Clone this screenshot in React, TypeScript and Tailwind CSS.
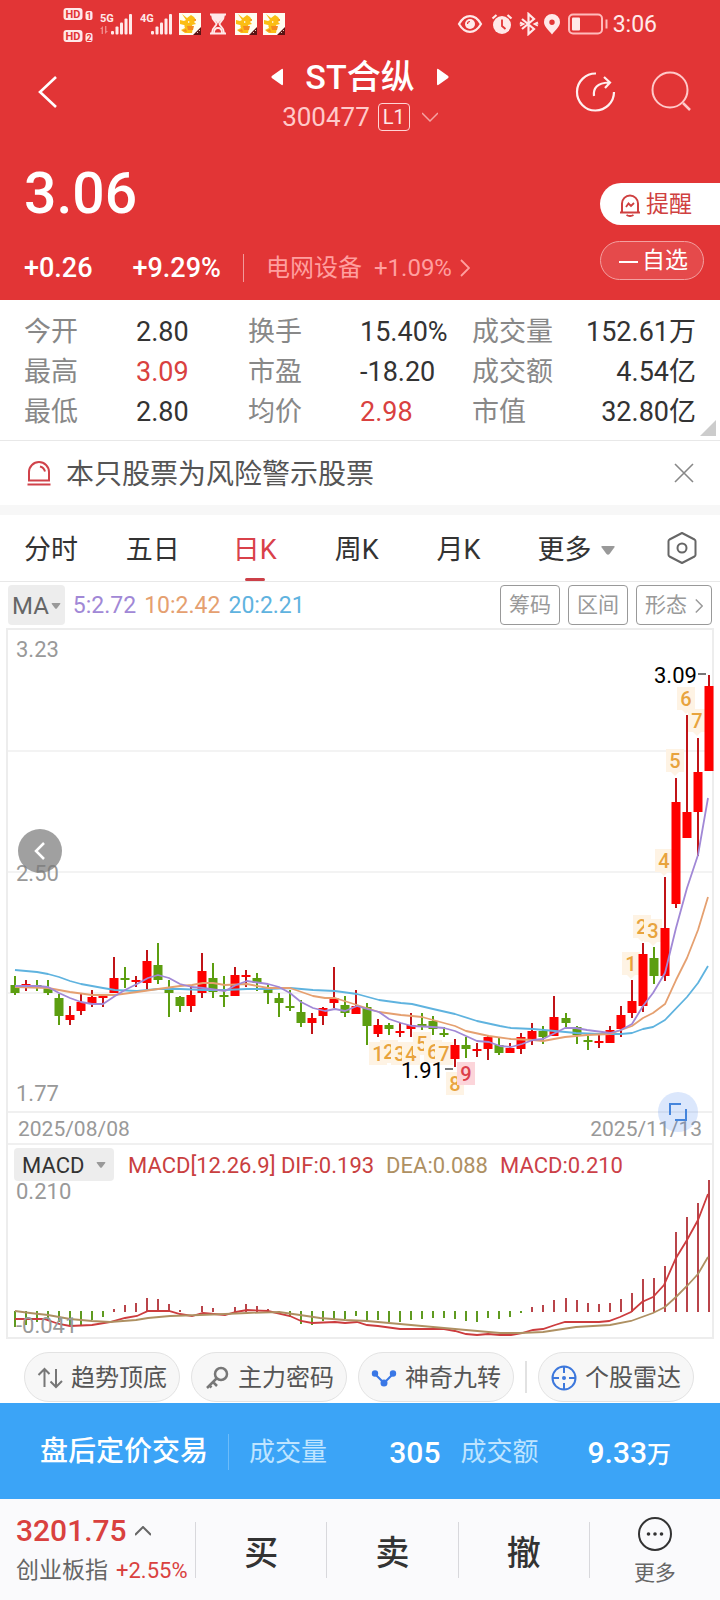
import { ReactNode } from 'react'

type Candle = [color: 'r' | 'g', high: number, top: number, bottom: number, low: number]

const candles: Candle[] = [
  ['g', 976, 985, 993, 995], ['r', 980, 984, 986, 991], ['g', 980, 985, 987, 991], ['g', 980, 988, 993, 995],
  ['g', 994, 998, 1016, 1025], ['r', 1006, 1015, 1020, 1025], ['r', 994, 1002, 1011, 1015], ['r', 990, 997, 1003, 1007],
  ['r', 995, 996, 998, 1007], ['r', 957, 978, 993, 993], ['g', 967, 978, 980, 988], ['r', 976, 980, 982, 987],
  ['r', 950, 961, 983, 989], ['g', 943, 965, 980, 984], ['g', 980, 989, 993, 1017], ['g', 996, 997, 1006, 1012],
  ['r', 986, 995, 1006, 1012], ['r', 953, 971, 993, 998], ['g', 963, 978, 992, 998], ['g', 976, 995, 997, 1007],
  ['r', 967, 975, 996, 996], ['r', 970, 975, 977, 987], ['g', 973, 978, 983, 991], ['g', 985, 989, 993, 1004],
  ['g', 993, 998, 1003, 1017], ['g', 990, 1006, 1008, 1011], ['g', 1000, 1012, 1023, 1027], ['r', 1013, 1018, 1023, 1034],
  ['r', 1007, 1008, 1016, 1025], ['r', 967, 998, 1003, 1008], ['g', 996, 1005, 1013, 1017], ['r', 990, 1006, 1014, 1014],
  ['g', 1003, 1007, 1026, 1045], ['r', 1019, 1025, 1034, 1037], ['g', 1023, 1025, 1029, 1035], ['r', 1023, 1031, 1033, 1037],
  ['r', 1013, 1025, 1029, 1037], ['g', 1013, 1024, 1026, 1030], ['g', 1016, 1021, 1029, 1035], ['g', 1027, 1033, 1035, 1037],
  ['r', 1039, 1045, 1059, 1067], ['g', 1037, 1045, 1049, 1058], ['r', 1043, 1049, 1051, 1057], ['r', 1035, 1037, 1049, 1060],
  ['g', 1038, 1045, 1053, 1055], ['r', 1043, 1048, 1053, 1053], ['r', 1033, 1037, 1049, 1054], ['r', 1023, 1031, 1040, 1045],
  ['g', 1026, 1031, 1037, 1044], ['r', 996, 1017, 1036, 1036], ['g', 1013, 1018, 1023, 1027], ['g', 1026, 1027, 1035, 1044],
  ['g', 1036, 1040, 1042, 1050], ['r', 1035, 1041, 1043, 1048], ['r', 1026, 1030, 1043, 1043], ['r', 1006, 1015, 1029, 1037],
  ['r', 980, 1001, 1013, 1018], ['r', 943, 954, 1006, 1012], ['g', 947, 958, 976, 984], ['r', 877, 928, 976, 981],
  ['r', 778, 802, 904, 908], ['r', 715, 812, 838, 838], ['r', 738, 772, 812, 856], ['r', 675, 686, 771, 771],
]

const ma5 = '15,986 37,986 48,987 59,993 70,998 81,1002 92,1004 103,1004 115,996 125,990 137,984 148,978 158,975 169,978 180,984 192,987 203,988 225,991 236,985 247,981 268,984 279,987 290,993 301,1002 313,1008 325,1011 335,1009 345,1011 357,1006 367,1009 379,1012 389,1019 401,1023 412,1026 433,1027 444,1028 455,1031 466,1036 477,1041 489,1042 500,1046 511,1047 522,1044 533,1040 543,1039 555,1033 565,1028 576,1028 587,1030 610,1033 621,1030 632,1024 643,1006 653,993 665,973 676,928 687,888 698,855 708,798'
const ma10 = '15,987 48,988 70,992 92,995 115,995 137,992 158,989 180,986 192,985 203,983 213,983 225,985 247,984 268,988 290,988 313,996 325,998 335,998 357,1005 379,1012 401,1015 412,1016 422,1017 433,1020 455,1026 466,1031 489,1036 511,1039 533,1040 543,1041 565,1037 587,1035 610,1034 621,1030 632,1026 643,1018 653,1013 665,1004 676,980 687,958 698,930 708,897'
const ma20 = '15,970 37,972 48,974 59,977 70,981 81,984 103,988 115,990 137,991 158,989 180,989 203,990 225,990 247,989 268,989 290,988 313,990 335,991 357,994 379,1000 401,1003 412,1004 433,1009 455,1014 477,1021 500,1026 511,1028 533,1029 555,1031 576,1033 599,1034 621,1034 632,1033 643,1029 653,1027 665,1020 687,997 698,983 708,966'

const dif = '15,1319 44,1319 59,1324 70,1326 92,1325 110,1322 125,1318 137,1316 148,1311 158,1311 169,1311 180,1314 192,1316 203,1313 225,1315 236,1312 247,1310 268,1311 290,1316 301,1321 312,1323 335,1322 345,1323 357,1322 367,1325 378,1326 400,1329 444,1329 455,1331 466,1334 477,1335 488,1334 500,1335 511,1335 522,1333 533,1330 543,1329 555,1325 565,1322 599,1322 609,1321 620,1317 631,1312 642,1302 653,1297 664,1285 676,1258 687,1240 698,1220 708,1194'
const dea = '15,1311 30,1313 48,1315 70,1319 92,1321 110,1322 136,1320 148,1318 170,1316 200,1315 225,1314 247,1313 279,1312 300,1315 320,1318 345,1320 367,1321 400,1324 433,1327 466,1330 500,1333 520,1333 543,1332 576,1327 610,1325 631,1321 653,1313 665,1307 676,1297 687,1286 698,1274 708,1257'

// end of each histogram bar, measured from the zero axis
const histogram = [
  -16, -14, -11, -10, -11, -15, -14, -9, -6, 3, 7, 9, 14, 13, 8, 2, 0, 6, 4, 0, 5, 8, 6, 3,
  -3, -6, -13, -14, -10, -9, -8, -5, -9, -9, -11, -11, -9, -8, -7, -7, -8, -10, -11, -7, -8, -6, -2,
  5, 7, 12, 14, 12, 9, 8, 9, 13, 19, 33, 34, 46, 80, 95, 109, 132,
]

const marks: [label: string, x: number, y: number][] = [
  ['1', 378, 1061], ['2', 389, 1059], ['3', 400, 1061], ['4', 411, 1061], ['5', 422, 1051], ['6', 433, 1059], ['7', 444, 1061],
  ['8', 455, 1091], ['9', 466, 1081],
  ['1', 631, 971], ['2', 642, 934], ['3', 653, 938], ['4', 664, 868], ['5', 675, 768], ['6', 686, 706], ['7', 697, 728],
]

const slotX = (i: number) => Math.round(15 + i * 11.01)

const stats = [
  [['今开', '2.80', ''], ['换手', '15.40%', ''], ['成交量', '152.61万', '']],
  [['最高', '3.09', 'up'], ['市盈', '-18.20', ''], ['成交额', '4.54亿', '']],
  [['最低', '2.80', ''], ['均价', '2.98', 'up'], ['市值', '32.80亿', '']],
]

function Caret({ className }: { className: string }) {
  return (
    <svg viewBox="0 0 14 9" className={className} fill="currentColor">
      <path d="M1.5 0h11q2 0 .8 1.6L8.5 8Q7 9.5 5.5 8L.7 1.6Q-.5 0 1.5 0Z" />
    </svg>
  )
}

function Signal({ label, arrows }: { label: string; arrows?: boolean }) {
  return (
    <svg viewBox="0 0 34 24" className="h-6 w-[34px]" fill="#ffe9e9">
      <text x="0" y="10" fontSize="11" fontWeight="700">{label}</text>
      {arrows && <path d="M0 17l3-3v8H1.6v-5zM5 14h1.4v5H8l-3 3z" fill="#f08a8a" />}
      <rect x="11" y="19" width="3" height="3.5" rx="1" />
      <rect x="15.5" y="14.5" width="3" height="8" rx="1" />
      <rect x="20" y="10.5" width="3" height="12" rx="1" />
      <rect x="24.5" y="6.5" width="3" height="16" rx="1" />
      <rect x="29" y="2" width="3" height="20.5" rx="1" />
    </svg>
  )
}

function FoxIcon() {
  return (
    <svg viewBox="0 0 22 22" className="size-[22px]">
      <path fill="#fffdf2" d="M0 0h22v22H0z" />
      <path fill="#fbbd14" d="M3 1l5 4 4-3 3 2 2 3-2 2 2 2-4 1 1 3-1 5H6l-4-3 4-2-1-3-4-1V7l4 1 2-1z" />
      <path fill="#f58a1f" d="M8 13h7l-1 4H9zM14 7l3-1v2zM3 18l4-2 1 3z" />
      <path fill="#fff" d="M9 8l2 1-2 1zM1 12l5 0-3 2z" />
      <path fill="#5b1414" d="M22 14v8h-8z" />
      <path stroke="#e9c9b8" d="M18 19l1 1M20 17l1 1" />
    </svg>
  )
}

function StatusBar() {
  return (
    <div className="flex h-12 items-center justify-between px-[63px]">
      <div className="flex items-center">
        <svg viewBox="0 0 30 36" className="mr-[7px] h-9 w-[30px] shrink-0">
          {[0, 22].map((y, i) => (
            <g key={y}>
              <rect x="0.5" y={y + 2} width="19" height="12" rx="3" fill="#ffe9e9" />
              <text x="10" y={y + 12} fontSize="11" fontWeight="700" textAnchor="middle" fill="#e23536">HD</text>
              <rect x="22.5" y={y + 5} width="7" height="9" rx="2" fill="#ffe9e9" />
              <text x="26" y={y + 13} fontSize="9" fontWeight="700" textAnchor="middle" fill="#e23536">{i + 1}</text>
            </g>
          ))}
        </svg>
        <Signal label="5G" arrows />
        <div className="w-1.5" />
        <Signal label="4G" />
        <div className="ml-[5px] flex items-center gap-1.5">
          <FoxIcon />
          <svg viewBox="0 0 22 22" className="size-[22px]" fill="none" stroke="#ffe9e9" strokeWidth="1.8">
            <path d="M3 1.5h16M3 20.5h16" />
            <path d="M5 2c0 6 4 6 4.5 9-.5 3-4.5 3-4.5 9M17 2c0 6-4 6-4.5 9 .5 3 4.5 3 4.5 9" />
            <path d="M5 2h12c0 5-4 5-6 9-2-4-6-4-6-9z" fill="#ffe9e9" stroke="none" />
            <path d="M7 20c0-4 2-5 4-5s4 1 4 5" />
          </svg>
          <FoxIcon />
          <FoxIcon />
        </div>
      </div>
      <div className="flex items-center text-[#ffe9e9]">
        <svg viewBox="0 0 26 22" className="h-[22px] w-[26px]" fill="none" stroke="currentColor" strokeWidth="2.2">
          <path d="M2 11C8 .5 18 .5 24 11 18 21.5 8 21.5 2 11z" />
          <circle cx="13" cy="11" r="5" fill="currentColor" stroke="none" />
          <path d="M10.5 11q0-2.5 2.5-2.5" stroke="#e23536" strokeWidth="1.2" />
        </svg>
        <svg viewBox="0 0 22 22" className="ml-2 size-[22px]" fill="none" stroke="currentColor" strokeWidth="2.2">
          <circle cx="11" cy="12" r="9" fill="currentColor" stroke="none" />
          <path d="M1.5 5.5L5.5 2M20.5 5.5L16.5 2" />
          <path d="M11 6.5V13l3.5 3" stroke="#e23536" strokeWidth="1.8" />
        </svg>
        <svg viewBox="0 0 20 24" className="ml-1.5 h-6 w-5" fill="none" stroke="currentColor" strokeWidth="2.2">
          <path d="M3 7l12 10-5.5 5V2L15 7 3 17" />
          <path d="M1 10.5l3 1.5-3 1.5M19 10.5L16 12l3 1.5" />
        </svg>
        <svg viewBox="0 0 18 22" className="ml-1 h-[22px] w-[18px]" fill="currentColor">
          <path fillRule="evenodd" d="M9 1a8 8 0 0 1 8 8c0 4.5-4.5 8-8 12.5C5.5 17 1 13.5 1 9a8 8 0 0 1 8-8zm0 5.5a2.7 2.7 0 1 0 0 5.4 2.7 2.7 0 0 0 0-5.4z" />
        </svg>
        <svg viewBox="0 0 42 22" className="ml-1.5 h-[22px] w-[42px]" fill="none" stroke="#fbb" strokeWidth="2">
          <rect x="2" y="1.5" width="33" height="19" rx="4" />
          <rect x="5" y="4.5" width="8" height="13" rx="1" fill="#ffe9e9" stroke="none" />
          <path d="M39.5 6.5v9" />
        </svg>
        <span className="ml-1 pt-0.5 text-[23px] leading-6">3:06</span>
      </div>
    </div>
  )
}

function Header() {
  return (
    <header className="bg-[#e23536] text-white">
      <StatusBar />
      <div className="flex h-[92px] items-center justify-between px-7 pb-1">
        <div className="flex-1">
          <button aria-label="返回" className="ml-2 block">
            <svg viewBox="0 0 24 36" className="h-9 w-6" fill="none" stroke="currentColor" strokeWidth="2.6">
              <path d="M20 3L4 18l16 15" />
            </svg>
          </button>
        </div>
        <div className="flex flex-col items-center pt-2">
          <div className="flex items-center gap-[22px]">
            <button aria-label="上一只">
              <svg viewBox="0 0 12 18" className="h-[18px] w-3" fill="currentColor"><path d="M12 2v14q0 2-2 .5L.8 10Q0 9 .8 8L10 1.5Q12 0 12 2z" /></svg>
            </button>
            <h1 className="text-[34px] leading-10 font-medium">ST合纵</h1>
            <button aria-label="下一只">
              <svg viewBox="0 0 12 18" className="h-[18px] w-3" fill="currentColor"><path d="M0 2v14q0 2 2 .5L11.2 10q.8-1 0-2L2 1.5Q0 0 0 2z" /></svg>
            </button>
          </div>
          <button className="flex items-center pt-0.5 text-[26px] leading-9 text-[#ffc9c9]">
            300477
            <span className="ml-2 flex h-7 items-center rounded border border-[#ffd5d5] px-1 text-[20px] text-[#ffe9e9]">L1</span>
            <svg viewBox="0 0 16 10" className="ml-3 h-2.5 w-4" fill="none" stroke="#f5a3a3" strokeWidth="1.5"><path d="M0 1l8 8 8-8" /></svg>
          </button>
        </div>
        <div className="flex flex-1 items-center justify-end gap-[34px]">
          <button aria-label="分享">
            <svg viewBox="0 0 42 42" className="size-[42px]" fill="none" stroke="#fff0f0" strokeWidth="2.2">
              <path d="M22 2.5a18.5 18.5 0 1 0 18 18.5" />
              <path d="M20 25c-1-8 3-13 15-13.5M30 6l6 5.5-5 5.5" />
            </svg>
          </button>
          <button aria-label="搜索">
            <svg viewBox="0 0 42 42" className="size-[42px]" fill="none" stroke="#ffc9c9" strokeWidth="2">
              <circle cx="20" cy="19" r="17.5" />
              <path d="M33 32l7 7" strokeWidth="2.5" />
            </svg>
          </button>
        </div>
      </div>
      <div className="flex h-40 justify-between pl-6">
        <div className="flex flex-col">
          <div className="pt-[22px] text-[57px] leading-[64px] font-medium">3.06</div>
          <div className="mt-6 flex items-center text-[27px] leading-9 font-medium">
            <span>+0.26</span>
            <span className="ml-10">+9.29%</span>
            <span className="mx-[22px] h-7 w-px bg-[#f29a9a]" />
            <a href="#sector" className="flex items-center text-2xl font-normal text-[#ff9f9f]">
              电网设备
              <span className="ml-3">+1.09%</span>
              <svg viewBox="0 0 10 18" className="ml-2 h-[18px] w-2.5" fill="none" stroke="currentColor" strokeWidth="1.8"><path d="M1 1l8 8-8 8" /></svg>
            </a>
          </div>
        </div>
        <div className="flex w-[120px] flex-col items-start pt-[43px]">
          <button className="flex h-[42px] w-full items-center rounded-l-full bg-white pt-0.5 pl-[18px] text-[23px] text-[#cf4040]">
            <svg viewBox="0 0 24 24" className="mr-1 size-6" fill="none" stroke="currentColor" strokeWidth="2">
              <path d="M2 19.5h20M4 19V10.5a8 8 0 0 1 16 0V19" />
              <path d="M8.5 22q3.5 2 7 0" />
              <path d="M8 14l2.5-3.5L13 13l3-3" strokeWidth="1.8" />
            </svg>
            提醒
          </button>
          <button className="mt-4 flex h-[39px] w-[104px] items-center rounded-full border border-[#f3a0a0] bg-[#e54a4b] pt-0.5 pl-[18px] text-[23px]">
            <span className="mr-1 h-0.5 w-[19px] bg-white" />
            自选
          </button>
        </div>
      </div>
    </header>
  )
}

function Stats() {
  return (
    <section className="relative border-b border-[#e8e8e8] px-6 pt-3 pb-2">
      <table className="w-full table-fixed text-[27px] leading-10">
        <colgroup>
          <col className="w-1/6" /><col className="w-1/6" /><col className="w-1/6" />
          <col className="w-1/6" /><col className="w-1/6" /><col className="w-1/6" />
        </colgroup>
        <tbody>
          {stats.map((row) => (
            <tr key={row[0][0]} className="h-10">
              {row.map(([label, value, tone], i) => [
                <th key={label} className="p-0 text-left font-normal whitespace-nowrap text-[#888]">{label}</th>,
                <td key={label + 'v'} className={i === 2 ? 'p-0 text-right whitespace-nowrap text-[#333]' : tone === 'up' ? 'p-0 text-[#d9413f]' : 'p-0 text-[#333]'}>
                  <span className={i === 2 ? '-ml-8' : ''}>{value}</span>
                </td>,
              ])}
            </tr>
          ))}
        </tbody>
      </table>
      <svg viewBox="0 0 16 16" className="absolute right-1 bottom-1 size-4" fill="#ccc"><path d="M16 0v16H0z" /></svg>
    </section>
  )
}

function Tabs() {
  const tab = 'relative flex h-full w-[15.3%] items-center justify-center pt-1'
  return (
    <nav className="flex h-[67px] items-center border-b border-[#e8e8e8] pr-[22px] text-[27px] whitespace-nowrap text-[#333]">
      <div className="flex h-full flex-1 items-center">
        <button className={tab}>分时</button>
        <button className={tab}>五日</button>
        <button className={tab}>
          <span className="text-[#d9414a]">日K</span>
          <span className="absolute bottom-0 left-1/2 h-[3px] w-5 -translate-x-1/2 rounded-full bg-[#cc4048]" />
        </button>
        <button className={tab}>周K</button>
        <button className={tab}>月K</button>
        <button className="flex h-full flex-1 items-center pt-1 pl-7">
          更多<Caret className="ml-2.5 h-[9px] w-3.5 text-[#999]" />
        </button>
      </div>
      <button aria-label="设置">
        <svg viewBox="0 0 32 34" className="h-[34px] w-8" fill="none" stroke="#666" strokeWidth="2" strokeLinejoin="round">
          <path d="M16 2l12.5 6.5q1 .6 1 1.8v13.4q0 1.200-1 1.8L16 32 3.5 25.5q-1-.6-1-1.8V10.3q0-1.2 1-1.8z" />
          <circle cx="16" cy="17" r="4.5" />
        </svg>
      </button>
    </nav>
  )
}

function Outlined({ children }: { children: ReactNode }) {
  return <button className="flex h-10 items-center rounded border border-[#999] px-2 pt-0.5 text-[21px] text-[#999]">{children}</button>
}

function KChart() {
  return (
    <div className="relative">
      <svg viewBox="8 630 704 481" className="block w-full overflow-visible">
        <path d="M8 751H712M8 872H712M8 993H712" stroke="#f3f3f3" strokeWidth="2" />
        <g fontSize="22" fill="#999">
          <text x="16" y="657">3.23</text>
          <text x="16" y="881">2.50</text>
          <text x="16" y="1101">1.77</text>
        </g>
        {marks.map(([label, x, y]) => (
          <g key={label + x}>
            <path d={`M${x - 9} ${y - 19}h18v23h-18z`} fill={label === '9' ? '#fcd5da' : '#fef3e4'} />
            {label !== '9' && y < 1000 && <path d={`M${x - 4} ${y + 4}h8l-4 4z`} fill="#fef3e4" />}
            <text x={x} y={y} fontSize="20" fontWeight="500" textAnchor="middle" fill={label === '9' ? '#dc3f4c' : '#e8a33d'}>{label}</text>
          </g>
        ))}
        {candles.map(([color, high, top, bottom, low], i) => (
          <g key={i} fill={color === 'r' ? '#fe0000' : '#5c9e10'}>
            <rect x={slotX(i) - 1} y={high} width="2" height={low - high} fill={color === 'r' ? '#c01418' : '#5c9e10'} />
            <rect x={slotX(i) - 4.5} y={top} width="9" height={bottom - top} />
          </g>
        ))}
        <g fill="none" strokeWidth="1.8" strokeLinejoin="round">
          <polyline points={ma20} stroke="#5fb3df" />
          <polyline points={ma10} stroke="#e5a070" />
          <polyline points={ma5} stroke="#a188d6" />
        </g>
        <g fontSize="22" fill="#000">
          <text x="654" y="683">3.09</text>
          <text x="401" y="1078">1.91</text>
        </g>
        <path d="M698 674h8M445 1069h8" stroke="#777" strokeWidth="2" />
      </svg>
      <button aria-label="向左" className="absolute top-[199px] left-2.5 flex size-11 items-center justify-center rounded-full bg-[#777]/70">
        <svg viewBox="0 0 12 20" className="h-5 w-3" fill="none" stroke="#fff" strokeWidth="2.5"><path d="M10 2L2 10l8 8" /></svg>
      </button>
      <button aria-label="全屏" className="absolute right-3.5 -bottom-[21px] z-10 flex size-10 items-center justify-center rounded-full bg-[#4c86ee]/20">
        <svg viewBox="0 0 18 18" className="size-[18px]" fill="none" stroke="#4585dc" strokeWidth="2"><path d="M1 12V1h11M17 6v11H6" /></svg>
      </button>
    </div>
  )
}

function MacdChart() {
  return (
    <svg viewBox="8 1181 704 156" className="block w-full overflow-visible">
      {histogram.map((v, i) => v !== 0 && (
        <rect
          key={i}
          x={slotX(i) - 1}
          y={v > 0 ? 1312 - v : 1311}
          width="2"
          height={Math.abs(v)}
          fill={v > 0 ? '#b9444a' : '#5f9a20'}
        />
      ))}
      <polyline points={dif} fill="none" stroke="#cc3c3e" strokeWidth="1.8" />
      <polyline points={dea} fill="none" stroke="#ae9062" strokeWidth="1.8" />
      <g fontSize="22" fill="#999">
        <text x="16" y="1199">0.210</text>
        <text x="16" y="1333">-0.041</text>
      </g>
    </svg>
  )
}

function Pill({ icon, children }: { icon: ReactNode; children: ReactNode }) {
  return (
    <button className="flex h-[50px] shrink-0 items-center gap-2 rounded-full border border-[#e3e3e3] bg-[#f7f7f7] px-3 pt-0.5 text-2xl whitespace-nowrap text-[#555]">
      {icon}
      {children}
    </button>
  )
}

function Tools() {
  return (
    <div className="flex items-center justify-between overflow-hidden pt-[13px] pr-[26px] pb-px pl-6">
      <Pill icon={
        <svg viewBox="0 0 26 24" className="h-6 w-[26px]" fill="none" stroke="#777" strokeWidth="2"><path d="M7.5 21V3M1.5 9l6-6 5 5M19 3v18M13.5 15.5L19 21l6-6" /></svg>
      }>趋势顶底</Pill>
      <Pill icon={
        <svg viewBox="0 0 26 24" className="h-6 w-[26px]" fill="none" stroke="#777" strokeWidth="2.5"><circle cx="17" cy="8" r="6" /><path d="M13 12L3 22M9 16l4 4M5.5 19.5l2 2" /></svg>
      }>主力密码</Pill>
      <Pill icon={
        <svg viewBox="0 0 26 24" className="h-6 w-[26px]" fill="#3a78e6" stroke="#3a78e6" strokeWidth="2"><path d="M4 8l9 9 9-9" fill="none" /><circle cx="4" cy="7.5" r="2.2" /><circle cx="22" cy="7.5" r="2.2" /><circle cx="13" cy="17" r="2.5" /></svg>
      }>神奇九转</Pill>
      <span className="h-8 w-0.5 bg-[#e2e2e2]" />
      <Pill icon={
        <svg viewBox="0 0 26 26" className="size-[26px]" fill="none" stroke="#3d78dc" strokeWidth="2"><circle cx="13" cy="13" r="11.5" /><path d="M13 2v6M13 18v6M2 13h6M18 13h6" /><circle cx="13" cy="13" r="2" fill="#3d78dc" stroke="none" /></svg>
      }>个股雷达</Pill>
    </div>
  )
}

function BottomBar() {
  return (
    <footer className="flex h-[101px] items-center bg-[#fafafc]">
      <button className="flex h-full w-[195px] flex-col justify-center pt-0.5 pl-4 text-left">
        <span className="flex items-center text-[30px] leading-9 font-medium text-[#d9413f]">
          3201.75
          <svg viewBox="0 0 16 10" className="ml-2 h-2.5 w-4" fill="none" stroke="#666" strokeWidth="2"><path d="M0 9l8-8 8 8" /></svg>
        </span>
        <span className="mt-1 flex items-center text-[23px] leading-9 whitespace-nowrap text-[#666]">
          创业板指<span className="ml-2 text-[22px] text-[#d9413f]">+2.55%</span>
        </span>
      </button>
      {['买', '卖', '撤'].map((label) => (
        <button key={label} className="h-14 flex-1 border-l border-[#d8d8dc] pt-1.5 text-[34px] font-medium text-[#333]">{label}</button>
      ))}
      <button className="flex h-14 flex-1 flex-col items-center justify-center border-l border-[#d8d8dc] pt-1 text-[21px] leading-7 text-[#666]">
        <svg viewBox="0 0 34 34" className="mb-2 size-[34px] shrink-0" fill="none" stroke="#333" strokeWidth="2">
          <circle cx="17" cy="17" r="16" />
          <g fill="#333" stroke="none"><circle cx="10.5" cy="17" r="1.8" /><circle cx="17" cy="17" r="1.8" /><circle cx="23.5" cy="17" r="1.8" /></g>
        </svg>
        更多
      </button>
    </footer>
  )
}

export default function App() {
  return (
    <div className="bg-white font-[Roboto,'Noto_Sans_CJK_SC',sans-serif]">
      <Header />
      <Stats />

      <div className="flex h-16 items-center px-[26px] text-[28px] text-[#555]">
        <svg viewBox="0 0 26 26" className="mr-3.5 size-[26px]" fill="none" stroke="#d0424a" strokeWidth="2">
          <path d="M3 20.5V12a10 10 0 0 1 20 0v8.5zM1.5 24.5h23" />
          <path d="M14 6.5q4 1 5 5" />
        </svg>
        <p className="flex-1 pt-1">本只股票为风险警示股票</p>
        <button aria-label="关闭">
          <svg viewBox="0 0 20 20" className="size-5" fill="none" stroke="#888" strokeWidth="1.6"><path d="M1 1l18 18M19 1L1 19" /></svg>
        </button>
      </div>
      <div className="h-2.5 bg-[#f7f7f7]" />

      <Tabs />

      <div className="flex h-[46px] items-center justify-between px-2">
        <div className="flex items-center gap-2 text-[23px]">
          <button className="flex h-10 items-center rounded bg-[#ededed] px-1 pt-0.5 text-2xl text-[#666]">
            MA<Caret className="ml-0.5 h-1.5 w-2.5 text-[#999]" />
          </button>
          <span className="pt-0.5 text-[#a188d6]">5:2.72</span>
          <span className="pt-0.5 text-[#e5a070]">10:2.42</span>
          <span className="pt-0.5 text-[#5fb3df]">20:2.21</span>
        </div>
        <div className="flex gap-2">
          <Outlined>筹码</Outlined>
          <Outlined>区间</Outlined>
          <Outlined>
            形态
            <svg viewBox="0 0 10 18" className="ml-2 h-4 w-2" fill="none" stroke="#999" strokeWidth="1.8"><path d="M1 1l8 8-8 8" /></svg>
          </Outlined>
        </div>
      </div>

      <main className="mx-1.5 border-2 border-[#ededed]">
        <KChart />
        <div className="flex h-[34px] items-center justify-between border-y-2 border-[#f0f0f0] px-2.5 pt-1 text-[21px] text-[#999]">
          <span>2025/08/08</span>
          <span>2025/11/13</span>
        </div>
        <div className="flex h-9 items-center pt-0.5 pl-1.5 text-[22px]">
          <button className="flex h-[33px] w-[100px] items-center justify-between rounded bg-[#ededed] px-2 pt-0.5 text-[#333]">
            MACD<Caret className="h-1.5 w-2.5 text-[#999]" />
          </button>
          <span className="ml-3.5 pt-0.5 text-[#c9403f]">MACD[12.26.9] DIF:0.193</span>
          <span className="ml-3 pt-0.5 text-[#ae9062]">DEA:0.088</span>
          <span className="ml-3 pt-0.5 text-[#cc4048]">MACD:0.210</span>
        </div>
        <MacdChart />
      </main>

      <Tools />

      <div className="flex h-24 items-center bg-[#3ba4f7] pt-0.5 pr-[49px] pl-10 text-[26px] text-[#bfe4ff]">
        <strong className="text-[28px] font-medium text-white">盘后定价交易</strong>
        <span className="mx-5 h-9 w-px bg-[#6cbcfa]" />
        <div className="flex flex-[10] items-center justify-between">
          成交量
          <span className="text-[30px] font-medium text-white">305</span>
        </div>
        <div className="ml-5 flex flex-[11] items-center justify-between">
          成交额
          <span className="text-[30px] font-medium text-white">9.33<span className="text-2xl">万</span></span>
        </div>
      </div>

      <BottomBar />
    </div>
  )
}
